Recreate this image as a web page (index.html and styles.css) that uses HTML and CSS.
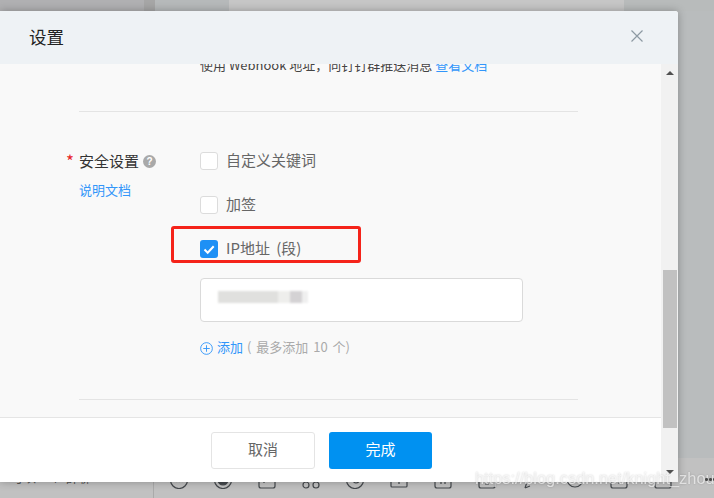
FILE: index.html
```html
<!DOCTYPE html>
<html lang="zh-CN">
<head>
<meta charset="utf-8">
<title>设置</title>
<link rel="stylesheet" href="styles.css">
</head>
<body>
<div class="desktop">
  <div class="top-strip">
    <div class="ts ts-a"></div><div class="ts ts-b"></div><div class="ts ts-c"></div><div class="ts ts-d"></div><div class="ts ts-e"></div>
  </div>
  <div class="mid-strip"></div>
  <div class="bottom-strip">
    <div class="chat-side"><span class="chat-text">可以 1 个 群聊</span></div>
    <div class="toolbar">
      <svg class="tool" viewBox="0 0 18 18"><circle cx="9" cy="9" r="8.5"/><path d="M6 11h.1M9 11h.1M12 11h.1"/></svg>
      <svg class="tool" viewBox="0 0 18 18"><circle cx="9" cy="9" r="8.5"/><circle class="fill" cx="9" cy="9" r="5"/></svg>
      <svg class="tool" viewBox="0 0 18 18"><path d="M1 3v12q0 2 2 2h12q2 0 2-2V3M6 3v9"/></svg>
      <svg class="tool" viewBox="0 0 18 18"><circle cx="4" cy="14" r="3"/><circle cx="14" cy="14" r="3"/></svg>
      <svg class="tool" viewBox="0 0 18 18"><circle cx="9" cy="9" r="8.5"/><circle cx="10" cy="9" r="3"/></svg>
      <svg class="tool" viewBox="0 0 18 18"><path d="M1 3v12q0 1 1 1h14q1 0 1-1V3M9 8v5"/></svg>
      <svg class="tool" viewBox="0 0 18 18"><path d="M1 3v12q0 2 2 2h12q2 0 2-2V3M7 11v2M11 11v2"/></svg>
      <svg class="tool" viewBox="0 0 18 18"><path d="M1 3v12q0 2 2 2h12q2 0 2-2V3M7 13h4"/></svg>
      <svg class="tool" viewBox="0 0 18 18"><path d="M3 17l2-6 8-8M3 17l5-2"/></svg>
      <svg class="tool" viewBox="0 0 18 18"><circle cx="9" cy="8" r="8"/></svg>
      <svg class="tool" viewBox="0 0 18 18"><path d="M1 3v12q0 2 2 2h12q2 0 2-2V3M9 9v4"/></svg>
      <svg class="tool" viewBox="0 0 18 18"><path d="M1 3v12q0 2 2 2h12q2 0 2-2V3"/></svg>
    </div>
  </div>
</div>

<section class="dialog">
  <header class="dialog-head">
    <h1 class="dialog-title">设置</h1>
    <svg class="close" viewBox="0 0 12 12" width="12" height="12"><path d="M.5.5l11 11M11.500.5l-11 11"/></svg>
  </header>
  <div class="dialog-main">
    <div class="dialog-col">
      <div class="dialog-body">
        <p class="note">使用 Webhook 地址，向钉钉群推送消息 <a class="link">查看文档</a></p>
        <hr class="rule rule-top">
        <div class="field">
          <div class="field-label">
            <div class="label-line"><span class="star">*</span><span class="label-text">安全设置</span><span class="help">?</span></div>
            <a class="link doc-link">说明文档</a>
          </div>
          <div class="field-control">
            <label class="opt"><span class="box"></span><span class="opt-text">自定义关键词</span></label>
            <label class="opt"><span class="box"></span><span class="opt-text">加签</span></label>
            <label class="opt"><span class="box box-on"><svg viewBox="0 0 18 18" width="18" height="18"><path d="M4.500 9.500l3.200 3.200 6-6.500"/></svg></span><span class="opt-text">IP地址 (段)</span></label>
            <div class="ip-input"><div class="smudge"><i class="s1"></i><i class="s2"></i><i class="s3"></i><i class="s4"></i></div></div>
            <div class="add-row">
              <svg class="plus" viewBox="0 0 14 14" width="13" height="13"><circle cx="7" cy="7" r="6.300"/><path d="M7 3.500v7M3.500 7h7"/></svg>
              <a class="link add-link">添加</a>
              <span class="add-hint">( 最多添加 10 个)</span>
            </div>
          </div>
        </div>
        <hr class="rule rule-bottom">
      </div>
      <footer class="dialog-foot">
        <button class="btn btn-cancel">取消</button>
        <button class="btn btn-ok">完成</button>
      </footer>
    </div>
    <div class="scrollbar">
      <span class="arrow arrow-up"></span>
      <span class="thumb"></span>
      <span class="arrow arrow-down"></span>
    </div>
  </div>
</section>

<div class="highlight"></div>
<div class="watermark">https://blog.csdn.net/knight_zhou</div>
<div class="more-dots"><i></i><i></i><i></i></div>
</body>
</html>
```

FILE: styles.css
```css
* { box-sizing: border-box; }
html, body { margin: 0; height: 100%; }
body {
  position: relative;
  width: 714px;
  height: 498px;
  overflow: hidden;
  background: #b9bcbd;
  font-family: "Noto Sans CJK SC", "Noto Sans", sans-serif;
  color: #333;
}

/* backdrop */
.desktop {
  position: absolute;
  inset: 0;
  display: flex;
  flex-direction: column;
}
.top-strip { display: flex; height: 11px; }
.ts { height: 100%; }
.ts-a { width: 144px; background: #b0b0b2; }
.ts-b { width: 11px; background: #a6a6a6; }
.ts-c { width: 74px; background: #b6b9ba; }
.ts-d { width: 395px; background: #c6c6c6; }
.ts-e { flex: 1; background: #b8bbbb; }
.mid-strip { flex: 1; background: #b9bcbd; }
.bottom-strip {
  height: 40px;
  display: flex;
  background: #c1c1c1;
}
.chat-side {
  width: 154px;
  border-right: 1px solid #aaa;
  padding: 5px 0 0 10px;
}
.chat-text { font-size: 13px; line-height: 20px; color: #555; }
.toolbar {
  display: flex;
  gap: 26px;
  padding: 13px 0 0 16px;
}
.tool {
  width: 18px;
  height: 18px;
  fill: none;
  stroke: #45494d;
  stroke-width: 1.200;
}
.tool .fill { fill: #45494d; }

/* dialog */
.dialog {
  position: absolute;
  left: 0;
  top: 11px;
  width: 678px;
  height: 471px;
  display: flex;
  flex-direction: column;
  border-radius: 0 3px 0 0;
  background: #fff;
  box-shadow: 0 0 8px rgba(0, 0, 0, .28);
}
.dialog-head {
  height: 53px;
  flex: none;
  display: flex;
  align-items: center;
  justify-content: space-between;
  padding: 0 35px 2px 29px;
  background: #eef2f5;
  border-radius: 0 3px 0 0;
}
.dialog-title {
  margin: 0;
  font-size: 17.500px;
  font-weight: 400;
  line-height: 24px;
  color: #222;
}
.close { fill: none; stroke: #8d9aa3; stroke-width: 1.200; margin-top: -1px; }
.dialog-main { flex: 1; display: flex; min-height: 0; }
.dialog-col { flex: 1; display: flex; flex-direction: column; min-width: 0; }
.dialog-body {
  flex: 1;
  overflow: hidden;
  padding: 0 83px 0 66px;
  background: #f9f9f9;
  font-size: 15px;
}
.note {
  margin: -9px 0 0 134px;
  font-size: 13px;
  line-height: 20px;
  white-space: nowrap;
  color: #444;
}
.link { color: #3296fa; }
.rule {
  margin: 0 0 0 13px;
  border: 0;
  border-top: 1px solid #e4e4e4;
}
.rule-top { margin-top: 36px; }
.rule-bottom { margin-top: 41px; }

.field { display: flex; margin-top: 39px; }
.field-label { width: 134px; flex: none; }
.label-line {
  display: flex;
  align-items: center;
  height: 20px;
  color: #333;
  line-height: 20px;
}
.star {
  width: 13px;
  color: #e8262a;
  font-size: 17px;
}
.help {
  width: 13px;
  height: 13px;
  margin-left: 4px;
  border-radius: 50%;
  background: #a9a9a9;
  color: #fff;
  font: 700 10px/13px "Liberation Sans", sans-serif;
  text-align: center;
}
.doc-link {
  display: block;
  margin: 9px 0 0 13px;
  font-size: 13px;
  line-height: 20px;
}
.field-control { flex: 1; min-width: 0; }
.opt {
  display: flex;
  align-items: center;
  gap: 8px;
  height: 20px;
  margin-bottom: 24px;
  color: #666;
  line-height: 20px;
}
.opt:nth-child(3) { margin-bottom: 19px; }
.opt-text { padding-bottom: 2px; word-spacing: 3px; }
.box {
  width: 18px;
  height: 18px;
  flex: none;
  border: 1px solid #dcdcdc;
  border-radius: 3px;
  background: #fff;
}
.box-on {
  border: 0;
  background: #1e90f5;
}
.box-on svg { display: block; fill: none; stroke: #fff; stroke-width: 2; }
.ip-input {
  width: 323px;
  height: 44px;
  padding: 12px 17px;
  border: 1px solid #dadada;
  border-radius: 4px;
  background: #fff;
}
.smudge { display: flex; height: 12px; filter: blur(1px); }
.smudge i { display: block; height: 100%; }
.s1 { width: 60px; background: #e0e0de; }
.s2 { width: 12px; background: #eeeeec; }
.s3 { width: 12px; background: #d4d2d4; }
.s4 { width: 6px; background: #efefef; }
.add-row {
  display: flex;
  align-items: center;
  height: 20px;
  margin-top: 16px;
  font-size: 13px;
  line-height: 18px;
}
.plus { fill: none; stroke: #3296fa; stroke-width: 1; }
.add-link { margin-left: 4px; padding-bottom: 2px; }
.add-hint { margin-left: 4px; padding-bottom: 2px; color: #aaa; white-space: nowrap; word-spacing: 2px; }

.dialog-foot {
  height: 65px;
  flex: none;
  display: flex;
  gap: 14px;
  padding: 14px 0 0 211px;
  border-top: 1px solid #e5e5e5;
  background: #fff;
}
.btn {
  width: 104px;
  height: 37px;
  padding: 0 0 3px;
  border-radius: 3px;
  font: 400 15px/20px "Noto Sans CJK SC", sans-serif;
}
.btn-cancel { border: 1px solid #e4e4e4; background: #fff; color: #666; }
.btn-ok { width: 103px; border: 0; background: #0091f1; color: #fff; }

.scrollbar {
  width: 17px;
  flex: none;
  display: flex;
  flex-direction: column;
  align-items: center;
  padding: 7px 0 8px;
  background: #f1f1f1;
}
.arrow { width: 0; height: 0; border-left: 4px solid transparent; border-right: 4px solid transparent; }
.arrow-up { border-bottom: 4px solid #505050; }
.arrow-down { border-top: 4px solid #505050; }
.thumb { width: 14px; height: 159px; margin: 195px 0 42px; background: #c1c1c1; }

/* annotations over the screenshot */
.highlight {
  position: absolute;
  left: 171px;
  top: 226px;
  width: 190px;
  height: 37px;
  border: 3px solid #f5231a;
  border-radius: 3px;
}
.watermark {
  position: absolute;
  left: 475px;
  top: 468px;
  font: 16.400px/20px "Liberation Sans", sans-serif;
  white-space: nowrap;
  color: rgba(255, 255, 255, .65);
  text-shadow: 0 0 2px rgba(0, 0, 0, .22);
  filter: blur(.4px);
}
.more-dots {
  position: absolute;
  left: 705px;
  top: 478px;
  display: flex;
  gap: 1.500px;
}
.more-dots i { width: 2.500px; height: 2.500px; border-radius: 50%; background: #4a4a4a; }
```
